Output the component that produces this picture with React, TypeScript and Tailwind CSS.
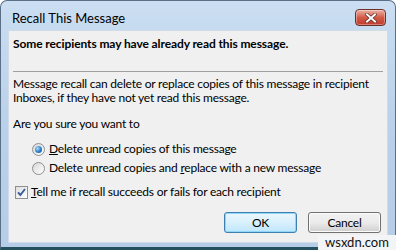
import React from "react";

const font = { fontFamily: 'Lato, "Open Sans", sans-serif' };

function Radio({ checked }: { checked?: boolean }) {
  return (
    <span className="flex h-[13px] w-[13px] shrink-0 items-center justify-center rounded-full border border-[#8f8f8f] bg-gradient-to-br from-[#d6d6d6] via-[#ececec] to-[#ffffff]">
      {checked && (
        <span className="h-[7px] w-[7px] rounded-full bg-[radial-gradient(circle_at_35%_35%,#a8dcff,#2b7cc9_55%,#0b4a8f)]" />
      )}
    </span>
  );
}

function Checkbox() {
  return (
    <span className="flex h-[13px] w-[13px] shrink-0 items-center justify-center border border-[#8e8f8f] bg-gradient-to-br from-[#dedede] to-[#ffffff]">
      <svg width="9" height="9" viewBox="0 0 9 9">
        <path d="M1 4.3 L3.4 7 L8 1" fill="none" stroke="#3b5a9a" strokeWidth="1.9" />
      </svg>
    </span>
  );
}

export default function App() {
  return (
    <div className="relative h-[250px] w-[396px] bg-white" style={font}>
      <div className="flex h-[250px] w-[396px] flex-col rounded-t-[7px] border border-b-[3px] border-[#5b6f86] border-b-[#24505f] bg-gradient-to-b from-[#cbdef2] via-[#b9d1ea] to-[#b5cde7]">
        <div className="flex h-[29px] items-start justify-between pl-[11px] pr-[9px]">
          <span className="pt-[10px] text-[13px] leading-[15px] text-black">Recall This Message</span>
          <div className="mt-[8px] flex h-[17px] w-[31px] items-center justify-center rounded-[4px] border border-[#6d2f2a] bg-gradient-to-b from-[#eab1a4] via-[#d25a47] to-[#c0392b] shadow-[inset_0_0_0_1px_rgba(255,255,255,0.35)]">
            <svg width="12" height="10" viewBox="0 0 12 10">
              <path d="M2 1.5 L10 8.5 M10 1.5 L2 8.5" stroke="#5a2a25" strokeWidth="3.4" strokeLinecap="square" />
              <path d="M2 1.5 L10 8.5 M10 1.5 L2 8.5" stroke="#fff" strokeWidth="2" strokeLinecap="square" />
            </svg>
          </div>
        </div>
        <div className="mx-[7px] mb-[4px] flex flex-1 flex-col border border-[#d0dbe7] bg-[#f0f0f0] px-[4px] text-[12px] leading-[14px] tracking-[-0.22px] text-black">
          <div className="mt-[6px] font-bold tracking-[-0.1px]">Some recipients may have already read this message.</div>
          <div className="mt-[20px] h-px bg-[#a0a0a0]" />
          <div className="mt-[5px] whitespace-nowrap">
            Message recall can delete or replace copies of this message in recipient
            <br />
            Inboxes, if they have not yet read this message.
          </div>
          <div className="mt-[12px]">Are you sure you want to</div>
          <div className="mt-[11px] flex items-center gap-[4px] pl-[19px]">
            <Radio checked />
            <span>
              <u>D</u>elete unread copies of this message
            </span>
          </div>
          <div className="mt-[5px] flex items-center gap-[4px] pl-[19px]">
            <Radio />
            <span>
              Delete unread copies and <u>r</u>eplace with a new message
            </span>
          </div>
          <div className="mt-[10px] flex items-center gap-[3px] pl-[2px]">
            <Checkbox />
            <span>
              <u>T</u>ell me if recall succeeds or fails for each recipient
            </span>
          </div>
          <div className="mt-[13px] flex justify-end gap-[11px] pr-[2px]">
            <button className="h-[21px] w-[73px] rounded-[3px] border border-[#3c7fb1] bg-gradient-to-b from-[#eaf6fd] via-[#d9f0fc] to-[#bee6fd] text-[12px] shadow-[inset_0_0_0_1px_#8fd6fa]">
              OK
            </button>
            <button className="h-[21px] w-[73px] rounded-[3px] border border-[#707070] bg-gradient-to-b from-[#f2f2f2] via-[#ebebeb] to-[#cfcfcf] text-[12px] shadow-[inset_0_0_0_1px_#fcfcfc]">
              Cancel
            </button>
          </div>
        </div>
      </div>
      <div className="absolute left-[318px] top-[235px] flex h-[15px] w-[78px] items-center justify-center bg-[#f2f4f6]">
        <span className="text-[13px] leading-[15px] text-[#111]">wsxdn.com</span>
      </div>
    </div>
  );
}
